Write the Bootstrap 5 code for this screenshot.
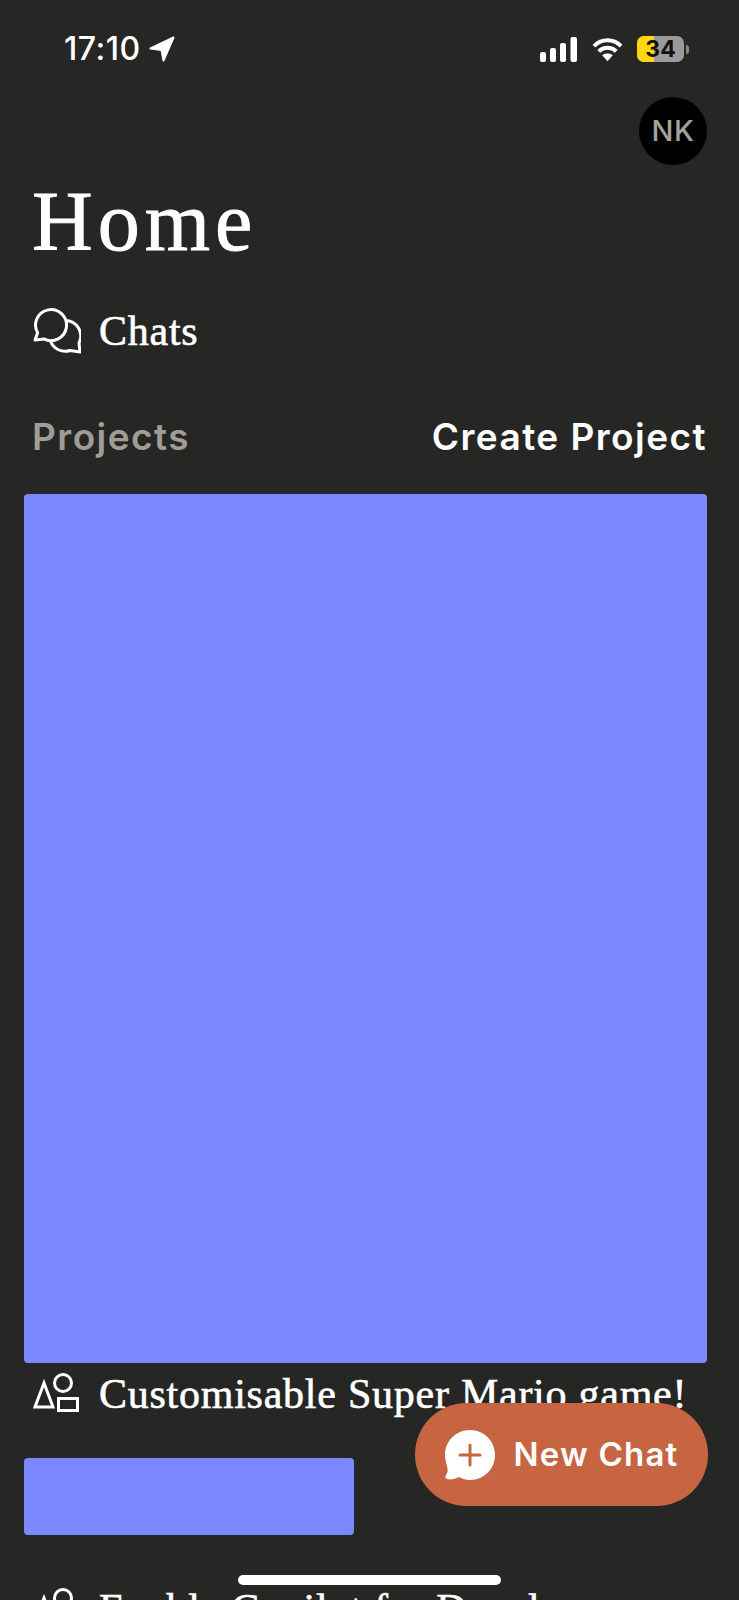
<!DOCTYPE html>
<html lang="en">
<head>
  <meta charset="UTF-8">
  <meta name="viewport" content="width=device-width, initial-scale=1.0">
  <title>Home</title>
  <link href="https://cdn.jsdelivr.net/npm/bootstrap@5.3.0/dist/css/bootstrap.min.css" rel="stylesheet">
  <style>
    html, body { height: 1600px; overflow: hidden; background: #262624; }
    .phone { position: relative; height: 1600px; overflow: hidden; color: #fff; font-family: "Liberation Serif", serif; }

    .status-row { height: 97px; padding: 30px 50px 0 64px; font-family: Inter, sans-serif; }
    .status-group { height: 38px; }
    .status-time { font-size: 32px; font-weight: 500; letter-spacing: .5px; line-height: 38px; }
    .signal-gap { margin-left: 15px; }
    .batt-gap { margin-left: 14px; }
    .batt { position: relative; width: 47px; height: 26px; border-radius: 7px; background: #9a9a98; font-size: 23px; font-weight: 700; color: #111; line-height: 26px; text-align: center; }
    .batt-fill { position: absolute; left: 0; top: 0; bottom: 0; width: 17px; border-radius: 7px 0 0 7px; background: #ffd60a; }
    .batt-num { position: relative; }
    .batt-cap { width: 3px; height: 9px; margin-left: 2px; border-radius: 0 3px 3px 0; background: #8a8a88; }

    .avatar-row { padding-right: 32px; }
    .user-avatar { width: 68px; height: 68px; background: #000; color: #a3a39e; font-family: Inter, sans-serif; font-size: 29px; font-weight: 500; letter-spacing: .5px; }

    .page-title { margin: 7px 0 0; padding-left: 32px; font-family: "Liberation Serif", serif; font-size: 84px; line-height: 100px; letter-spacing: 5px; font-weight: 400; -webkit-text-stroke: .9px #fff; }
    .item-row { padding-left: 33px; }
    .chats-row { margin-top: 36px; }
    .row-label { margin-left: 18px; font-size: 42px; line-height: 46px; letter-spacing: .75px; white-space: nowrap; -webkit-text-stroke: .6px #fff; }
    .row-icon { width: 48px; height: 46px; flex: none; }
    .shape-icon { height: 42px; }
    .head-row { margin-top: 61px; padding: 0 32px; font-family: Inter, sans-serif; font-size: 37px; font-weight: 600; line-height: 44px; letter-spacing: 1.45px; }
    .head-muted { color: #9f9e96; }
    .tile { margin-left: 24px; background: #7b88ff; border-radius: 4px; }
    .tile-big { width: 683px; height: 869px; margin-top: 35px; }
    .tile-small { width: 330px; height: 77px; margin-top: 41px; }
    .first-project { margin-top: 8px; }
    .next-project { margin-top: 51px; }

    .fab { position: absolute; left: 415px; top: 1403px; width: 293px; height: 103px; gap: 19px; border: 0; border-radius: 52px; background: #c76543; color: #fff; font-family: Inter, sans-serif; font-size: 33px; font-weight: 600; letter-spacing: 1.2px; }
    .home-bar { position: absolute; left: 238px; top: 1575px; width: 263px; height: 10px; border-radius: 5px; background: #fff; }
  </style>
</head>
<body>
  <div class="phone">
    <div class="status-row d-flex justify-content-between align-items-start">
      <div class="status-group d-flex align-items-center">
        <span class="status-time">17:10</span>
        <svg class="ms-2" width="26" height="26" viewBox="0 0 26 26"><path d="M24.5 1.5 L1.5 12.5 L12.5 14 L14.5 24.5 Z" fill="#fff" stroke="#fff" stroke-width="2" stroke-linejoin="round"/></svg>
      </div>
      <div class="status-group d-flex align-items-center">
        <svg width="37" height="25" viewBox="0 0 37 25"><rect x="0" y="15" width="6" height="10" rx="2" fill="#fff"/><rect x="10" y="11" width="6" height="14" rx="2" fill="#fff"/><rect x="20" y="6" width="6" height="19" rx="2" fill="#fff"/><rect x="30.5" y="0" width="6.5" height="25" rx="2" fill="#fff"/></svg>
        <svg class="signal-gap" width="31" height="25" viewBox="0 0 32 25"><path d="M2 9 C10 1 22 1 30 9 M7 14.5 C12 9.5 20 9.5 25 14.5" fill="none" stroke="#fff" stroke-width="4"/><path d="M10.5 18.5 C13 16 19 16 21.5 18.5 L16 24.5 Z" fill="#fff"/></svg>
        <div class="batt batt-gap"><div class="batt-fill"></div><span class="batt-num">34</span></div>
        <div class="batt-cap"></div>
      </div>
    </div>

    <div class="avatar-row d-flex justify-content-end">
      <div class="user-avatar rounded-circle d-flex align-items-center justify-content-center">NK</div>
    </div>

    <h1 class="page-title">Home</h1>

    <div class="item-row chats-row d-flex align-items-center">
      <svg class="row-icon" viewBox="0 0 48 46" fill="none" stroke="#fff" stroke-width="3" stroke-linejoin="round"><path d="M4.6 24.8 A15.5 15.5 0 1 1 11 30.9 L2 32 Z"/><path d="M32 12.5 A15.5 15.5 0 0 1 46 35 L47 44 L37 42.5 A15.5 15.5 0 0 1 17.5 33"/></svg>
      <span class="row-label">Chats</span>
    </div>

    <div class="head-row d-flex justify-content-between">
      <span class="head-muted">Projects</span>
      <span>Create Project</span>
    </div>

    <div class="tile tile-big"></div>
    <div class="item-row first-project d-flex align-items-center">
      <svg class="row-icon shape-icon" viewBox="0 0 48 42" fill="none" stroke="#fff" stroke-width="3"><path d="M11 10 L20 34 H2 Z"/><circle cx="30" cy="10" r="8.5"/><rect x="25.5" y="25.5" width="19" height="12"/></svg>
      <span class="row-label">Customisable Super Mario game!</span>
    </div>
    <div class="tile tile-small"></div>
    <div class="item-row next-project d-flex align-items-center">
      <svg class="row-icon shape-icon" viewBox="0 0 48 42" fill="none" stroke="#fff" stroke-width="3"><path d="M11 10 L20 34 H2 Z"/><circle cx="30" cy="10" r="8.5"/><rect x="25.5" y="25.5" width="19" height="12"/></svg>
      <span class="row-label">Enable Copilot for Developers</span>
    </div>

    <button class="fab d-flex align-items-center justify-content-center" type="button">
      <svg width="50" height="50" viewBox="0 0 50 50"><path d="M25 0 C39 0 50 11 50 25 C50 39 39 50 25 50 C20 50 17 48 14 47 C10 49 6 50 2 49 C0 48 0 47 1 45 C3 42 3 40 2 36 C1 32 0 29 0 25 C0 11 11 0 25 0 Z" fill="#fff"/><path d="M25 15 V35 M15 25 H35" stroke="#c76543" stroke-width="3" stroke-linecap="round"/></svg>
      <span>New Chat</span>
    </button>
    <div class="home-bar"></div>
  </div>
  <script src="https://cdn.jsdelivr.net/npm/bootstrap@5.3.0/dist/js/bootstrap.bundle.min.js"></script>
</body>
</html>
